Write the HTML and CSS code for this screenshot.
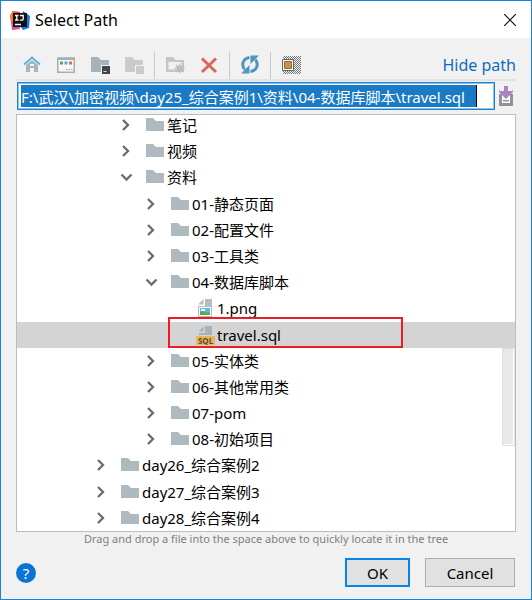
FILE: index.html
```html
<!DOCTYPE html>
<html lang="en">
<head>
<meta charset="utf-8">
<title>Select Path</title>
<link rel="stylesheet" href="styles.css">
</head>
<body>
<svg class="sprite" aria-hidden="true">
  <symbol id="folder" viewBox="0 0 18 16"><path fill="#aeb9c0" d="M0 1h7l3 3h8v10H0z"/></symbol>
  <symbol id="right" viewBox="0 0 16 16"><path d="M5 3l5 5-5 5" fill="none" stroke="#6b6b6b" stroke-width="2.3"/></symbol>
  <symbol id="down" viewBox="0 0 16 16"><path d="M3.500 5.500l5 5 5-5" fill="none" stroke="#6b6b6b" stroke-width="2.300"/></symbol>
</svg>
<main class="dialog">
  <header class="titlebar">
    <svg class="logo" viewBox="0 0 20 20"><path fill="#fc315f" d="M3 1l7 1 1 8-9 2-2-6z"/><path fill="#f97a25" d="M0 5l3-1 3 10-5-1z"/><path fill="#0a7cf0" d="M13 1l7 5-1 12-6 2-3-4z"/><path fill="#e8478b" d="M1 12h8l1 7-8 1z"/><path fill="#f97a25" d="M2 1l3 1-1 4-3-1z"/><path fill="#111" d="M3 3h14v14H3z"/><path fill="none" stroke="#fff" stroke-width="1.300" d="M5 5.500h3.500M5 10h3.500M6.750 5.500V10M10 5.500h3.200V9q0 1.200-1.200 1.200H9.800M5 14.500h6"/></svg>
    <h1 class="title">Select Path</h1>
    <button class="close" aria-label="Close"><svg viewBox="0 0 12 12"><path d="M0 0l12 12M12 0L0 12" stroke="#111" stroke-width="1.200"/></svg></button>
  </header>
  <div class="content">
    <div class="toolbar">
      <button class="tool" aria-label="Home"><svg viewBox="0 0 20 20"><path fill="#aab4ba" d="M4 10l6-5 6 5v7h-4v-4H8v4H4z"/><path fill="#f2f2f2" d="M8 9h4v2H8z"/><path d="M2 9.500l8-7 8 7" fill="none" stroke="#4bb8e2" stroke-width="1.800"/></svg></button>
      <button class="tool" aria-label="Project directory"><svg viewBox="0 0 20 20"><path fill="#f7f7f7" stroke="#a3afb6" stroke-width="1.500" d="M1.750 3.250h16.500v14H1.750z"/><path fill="#a3afb6" d="M1 2.500h18V5H1z"/><path fill="#4fae46" d="M4 6.500h3v3H4z"/><path fill="#44b2e4" d="M8.500 6.500h3v3h-3z"/><path fill="#f06a35" d="M13 6.500h3v3h-3z"/><path fill="#9aa5ab" d="M10 14h1.500v1H10zM12.500 14H14v1h-1.500zM15 14h1.500v1H15z"/></svg></button>
      <button class="tool" aria-label="Desktop directory"><svg viewBox="0 0 20 20"><path fill="#a7b3ba" d="M1 2h7l3 3h8v12H1z"/><path fill="#f2f2f2" d="M11 10h9v10h-9z"/><path fill="#45474b" d="M12 11h8v8h-8z"/><path fill="#ddd" d="M13.500 16h3v1h-3z"/></svg></button>
      <button class="tool" aria-label="Module directory" disabled><svg viewBox="0 0 20 20"><path fill="#cbcbcb" d="M1 2h7l3 3h8v12H1z"/><path fill="#f2f2f2" d="M11 10h9v10h-9z"/><path fill="#cbcbcb" d="M12 11h8v8h-8z"/></svg></button>
      <span class="separator"></span>
      <button class="tool" aria-label="New folder" disabled><svg viewBox="0 0 20 20"><path fill="#c6c6c6" fill-rule="evenodd" d="M1 2h7l3 3h8v12H1zM3.500 7v7.500h13V7z"/><circle cx="14.500" cy="13.500" r="3" fill="#bdbdbd"/><path stroke="#bdbdbd" stroke-width="1.300" d="M14.500 8.500v10M9.500 13.500h10M11 10l7 7M18 10l-7 7"/></svg></button>
      <button class="tool" aria-label="Delete"><svg viewBox="0 0 20 20"><path stroke="#dd6557" stroke-width="3" d="M3 3.500l14 13.500M17 3.500L3 17"/></svg></button>
      <span class="separator"></span>
      <button class="tool" aria-label="Refresh"><svg viewBox="0 0 20 20"><path fill="none" stroke="#4d96bd" stroke-width="3" d="M9.500 2.500C3 3.500 1 9.500 4.500 14.500M10.500 16.500C17 15.500 19 9.500 15.500 4.500"/><path fill="#4d96bd" d="M1 18.500h8.500V10zM19 .5h-8.500V9z"/></svg></button>
      <span class="separator"></span>
      <button class="tool" aria-label="Show hidden files"><svg viewBox="0 0 20 20"><defs><pattern id="dots" width="2" height="2" patternUnits="userSpaceOnUse"><path fill="#777" d="M0 0h1v1H0zM1 1h1v1H1z"/></pattern></defs><path fill="url(#dots)" d="M2 1h18v18H2z"/><path fill="#fff" stroke="#6b625e" d="M1.500 4.500h11v11h-11z"/><path fill="#c89344" stroke="#916840" d="M3.500 6.500h7v7h-7z"/></svg></button>
      <a class="hide" href="#path">Hide path</a>
    </div>
    <div class="pathrow">
      <div class="field"><input id="path" class="path" aria-label="Path" value="F:\武汉\加密视频\day25_综合案例1\资料\04-数据库脚本\travel.sql"></div>
      <button class="history" aria-label="Recent paths"><svg viewBox="0 0 16 20"><path fill="#929292" d="M1 8h3v9h8V8h3v12H1z"/><path fill="#fff" d="M4 10h8v7H4z"/><path fill="#929292" d="M5 14h6v1.500H5z"/><path fill="#a884c2" d="M6 0h4v5h4V3l1 3-7 7-7-7 1-3v2h4z"/></svg></button>
    </div>
    <div class="tree">
      <ul class="rows" role="tree">
        <li class="row l2" role="treeitem"><svg class="arrow"><use href="#right"/></svg><svg class="folder"><use href="#folder"/></svg>笔记</li>
        <li class="row l2" role="treeitem"><svg class="arrow"><use href="#right"/></svg><svg class="folder"><use href="#folder"/></svg>视频</li>
        <li class="row l2" role="treeitem"><svg class="arrow"><use href="#down"/></svg><svg class="folder"><use href="#folder"/></svg>资料</li>
        <li class="row l3" role="treeitem"><svg class="arrow"><use href="#right"/></svg><svg class="folder"><use href="#folder"/></svg>01-静态页面</li>
        <li class="row l3" role="treeitem"><svg class="arrow"><use href="#right"/></svg><svg class="folder"><use href="#folder"/></svg>02-配置文件</li>
        <li class="row l3" role="treeitem"><svg class="arrow"><use href="#right"/></svg><svg class="folder"><use href="#folder"/></svg>03-工具类</li>
        <li class="row l3" role="treeitem"><svg class="arrow"><use href="#down"/></svg><svg class="folder"><use href="#folder"/></svg>04-数据库脚本</li>
        <li class="row l4" role="treeitem"><svg class="file" viewBox="0 0 20 20"><path fill="#b3bdc3" d="M9 1h7v18H2V8h7z"/><path fill="#b3bdc3" d="M7.500 1v5.500H2z"/><path fill="#fff" d="M3 9h12v9H3z"/><path fill="#57bde4" d="M4 10h10v7H4z"/><path fill="#fff" d="M5 11h4v2H5z"/><path fill="#62a846" d="M4 17v-3l3-1 3 2 2-1 2 1v2z"/></svg>1.png</li>
        <li class="row l4 selected" role="treeitem" aria-selected="true"><svg class="file" viewBox="0 0 20 20"><path fill="#a7b1b7" d="M9 1h7v9H3V8h6z"/><path fill="#a7b1b7" d="M7.500 1v5.500H3z"/><path fill="#eab45f" d="M0 11h19v9H0z"/><text class="badge" x="9.500" y="18.500" text-anchor="middle">SQL</text></svg>travel.sql<span class="mark"></span></li>
        <li class="row l3" role="treeitem"><svg class="arrow"><use href="#right"/></svg><svg class="folder"><use href="#folder"/></svg>05-实体类</li>
        <li class="row l3" role="treeitem"><svg class="arrow"><use href="#right"/></svg><svg class="folder"><use href="#folder"/></svg>06-其他常用类</li>
        <li class="row l3" role="treeitem"><svg class="arrow"><use href="#right"/></svg><svg class="folder"><use href="#folder"/></svg>07-pom</li>
        <li class="row l3" role="treeitem"><svg class="arrow"><use href="#right"/></svg><svg class="folder"><use href="#folder"/></svg>08-初始项目</li>
        <li class="row l1" role="treeitem"><svg class="arrow"><use href="#right"/></svg><svg class="folder"><use href="#folder"/></svg>day26_综合案例2</li>
        <li class="row l1" role="treeitem"><svg class="arrow"><use href="#right"/></svg><svg class="folder"><use href="#folder"/></svg>day27_综合案例3</li>
        <li class="row l1" role="treeitem"><svg class="arrow"><use href="#right"/></svg><svg class="folder"><use href="#folder"/></svg>day28_综合案例4</li>
      </ul>
      <span class="thumb"></span>
    </div>
    <p class="hint">Drag and drop a file into the space above to quickly locate it in the tree</p>
    <footer class="footer">
      <button class="help" aria-label="Help">?</button>
      <button class="btn ok">OK</button>
      <button class="btn cancel">Cancel</button>
    </footer>
  </div>
</main>
</body>
</html>
```
FILE: styles.css
```css
* { box-sizing: border-box; }
body {
  margin: 0;
  font: 15px/20px "Noto Sans", "Noto Sans CJK SC", sans-serif;
  color: #000;
}
button { margin: 0; padding: 0; border: 0; background: none; font: inherit; color: inherit; }
svg { display: block; flex: none; }
.sprite { position: absolute; width: 0; height: 0; }
.dialog {
  display: flex;
  flex-direction: column;
  height: 100vh;
  min-height: 560px;
  border: 1px solid #1883d7;
  background: #f1f1f1;
}
.titlebar {
  display: flex;
  align-items: center;
  height: 37px;
  padding: 0 15px 0 9px;
  background: #fff;
}
.logo { width: 20px; height: 20px; }
.title { flex: 1; margin: 0 0 0 5px; font-size: 16px; font-weight: 400; }
.close svg { width: 12px; height: 12px; }
.content {
  display: flex;
  flex: 1;
  flex-direction: column;
  min-height: 0;
  padding: 13px 15px 12px;
}
.toolbar {
  display: flex;
  align-items: center;
  height: 30px;
  margin-left: -1px;
  border-bottom: 2px solid #e3e3e3;
}
.tool { display: grid; place-items: center; width: 34px; height: 28px; }
.tool svg { width: 20px; height: 20px; }
.separator { width: 1px; height: 27px; margin: 0 3px; background: #c9c9c9; }
.hide { margin-left: auto; font-size: 16px; color: #0f6cbd; text-decoration: none; }
.pathrow { display: flex; align-items: center; gap: 3px; margin: 1px 2px 4px 1px; }
.field {
  flex: 1;
  min-width: 0;
  padding: 2px 17px 2px 3px;
  border: 1px solid #1883d7;
  outline: 1px solid #8cc3ee;
  outline-offset: -2px;
  background: #fff;
}
.path {
  display: block;
  width: 100%;
  height: 22px;
  padding: 0;
  border: 0;
  border-right: 1px solid #000;
  outline: 0;
  background: #1a7bc4;
  color: #fff;
  font: inherit;
}
.history svg { width: 16px; height: 20px; }
.tree {
  position: relative;
  flex: 1;
  min-height: 0;
  overflow: hidden;
  border: 1px solid #bdbdbd;
  background: #fff;
}
.rows {
  display: flex;
  flex-direction: column;
  justify-content: space-between;
  height: calc(100% + 3px);
  margin: -3px 0 0;
  padding: 0;
  list-style: none;
}
.row { position: relative; display: flex; align-items: center; height: 26px; white-space: nowrap; }
.l1 { padding-left: 76px; }
.l2 { padding-left: 101px; }
.l3 { padding-left: 126px; }
.l4 { padding-left: 179px; }
.arrow { width: 16px; height: 16px; margin-right: 12px; }
.folder { width: 18px; height: 16px; margin-right: 3px; }
.file { width: 20px; height: 20px; margin-right: 1px; }
.badge { font: 700 8px "Noto Sans", sans-serif; fill: #5f4a26; }
.selected { background: #d4d4d4; }
.mark {
  position: absolute;
  z-index: 1;
  top: -5px;
  left: 151px;
  width: 235px;
  height: 31px;
  border: 2px solid #ed1c24;
}
.thumb {
  position: absolute;
  top: 56%;
  right: 0;
  width: 13px;
  height: 98px;
  border: 1px solid #e0e0e0;
  background: #e8e8e8;
  box-shadow: inset -1px -1px #fff;
}
.hint { margin: 0; font-size: 11px; line-height: 14px; text-align: center; color: #808080; }
.footer { display: flex; align-items: center; gap: 15px; margin-top: 12px; padding-right: 1px; }
.help {
  width: 20px;
  height: 20px;
  margin-right: auto;
  border-radius: 50%;
  background: #0a74d4;
  color: #fff;
  line-height: 20px;
}
.btn { height: 29px; border: 1px solid #adadad; background: #e1e1e1; line-height: 20px; }
.ok { width: 65px; border: 2px solid #0a84e4; }
.cancel { width: 90px; }
```
